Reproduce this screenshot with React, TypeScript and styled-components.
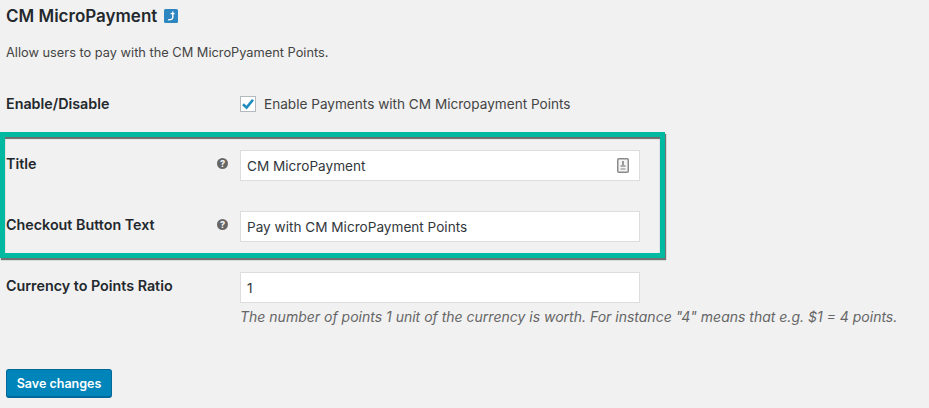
import React from "react";
import styled, { createGlobalStyle } from "styled-components";

const GlobalStyle = createGlobalStyle`
  html, body {
    margin: 0;
    padding: 0;
    background: #f1f1f1;
  }
  body {
    font-family: Inter, "Noto Sans", "Liberation Sans", sans-serif;
    color: #23282d;
  }
`;

const Page = styled.div`
  position: relative;
  width: 929px;
  height: 408px;
  padding: 7px 0 0 6px;
  box-sizing: border-box;
  overflow: hidden;
`;

const Heading = styled.div`
  display: flex;
  align-items: center;
  gap: 7px;
  height: 18px;
`;

const HeadingText = styled.h2`
  margin: 0;
  font-size: 17px;
  line-height: 18px;
  font-weight: 600;
  color: #23282d;
`;

const Intro = styled.p`
  margin: 19px 0 0;
  font-size: 12.8px;
  line-height: 18px;
  color: #444;
`;

const Rows = styled.div`
  display: flex;
  flex-direction: column;
  margin-top: 33px;
`;

const Row = styled.div<{ $gap: number }>`
  display: grid;
  grid-template-columns: 234px 400px;
  margin-bottom: ${(p) => p.$gap}px;
`;

const LabelCell = styled.div`
  display: flex;
  justify-content: space-between;
  padding-right: 12px;
`;

const Label = styled.label<{ $top: number }>`
  margin-top: ${(p) => p.$top}px;
  font-size: 14.3px;
  line-height: 18px;
  font-weight: 600;
  color: #23282d;
`;

const HelpIcon = styled.span`
  display: flex;
  width: 11px;
  height: 11px;
  margin-top: 8px;
  align-items: center;
  justify-content: center;
  border-radius: 50%;
  background: #666;
  color: #f1f1f1;
  font-size: 9px;
  line-height: 11px;
  font-weight: 800;
`;

const CheckRow = styled.div`
  display: flex;
  align-items: center;
  gap: 8px;
  height: 18px;
  white-space: nowrap;
  font-size: 13.6px;
  color: #444;
`;

const CheckBox = styled.span`
  display: flex;
  width: 16px;
  height: 16px;
  box-sizing: border-box;
  align-items: center;
  justify-content: center;
  background: #fff;
  border: 1px solid #b4b9be;
`;

const FieldWrap = styled.div`
  position: relative;
  width: 400px;
`;

const Input = styled.input`
  display: block;
  width: 400px;
  height: 31px;
  box-sizing: border-box;
  margin: 0;
  padding: 0 6px;
  background: #fff;
  border: 1px solid #ddd;
  outline: none;
  font-family: inherit;
  font-size: 13.6px;
  color: #32373c;
`;

const KeyIcon = styled.svg`
  position: absolute;
  top: 8px;
  right: 11px;
`;

const Hint = styled.p`
  margin: 5px 0 0;
  width: 680px;
  white-space: nowrap;
  font-size: 14px;
  line-height: 18px;
  font-style: italic;
  color: #666;
`;

const SaveButton = styled.button`
  display: block;
  width: 106px;
  height: 29px;
  margin-top: 43px;
  padding: 0;
  background: #0085ba;
  border: 1px solid #006799;
  border-bottom-width: 2px;
  border-radius: 3px;
  color: #fff;
  font-family: inherit;
  font-size: 12.5px;
  font-weight: 600;
`;

const Highlight = styled.div`
  position: absolute;
  left: 0;
  top: 132px;
  width: 665px;
  height: 126px;
  box-sizing: border-box;
  border: 5px solid #00b9a0;
  box-shadow:
    1px 2px 1px rgba(60, 60, 60, 0.7),
    inset 0 2px 1px rgba(60, 60, 60, 0.75);
  pointer-events: none;
`;

const BackLink = () => (
  <svg width="14" height="14" viewBox="0 0 14 14">
    <rect width="14" height="14" rx="1.5" fill="#2e86c1" />
    <path d="M8.8 2.6V8.6Q8.8 10.8 4.2 10.8M6.6 4.6H10.6" fill="none" stroke="#fff" strokeWidth="1.4" />
  </svg>
);

const Check = () => (
  <svg width="14" height="14" viewBox="0 0 14 14">
    <path d="M2 7.2 5.6 10.6 12 2.8" fill="none" stroke="#1e8cbe" strokeWidth="2.6" />
  </svg>
);

const App = () => {
  return (
    <Page>
      <GlobalStyle />
      <Heading>
        <HeadingText>CM MicroPayment</HeadingText>
        <BackLink />
      </Heading>
      <Intro>Allow users to pay with the CM MicroPyament Points.</Intro>
      <Rows>
        <Row $gap={37}>
          <LabelCell>
            <Label $top={0}>Enable/Disable</Label>
          </LabelCell>
          <CheckRow>
            <CheckBox>
              <Check />
            </CheckBox>
            Enable Payments with CM Micropayment Points
          </CheckRow>
        </Row>
        <Row $gap={30}>
          <LabelCell>
            <Label $top={5}>Title</Label>
            <HelpIcon>?</HelpIcon>
          </LabelCell>
          <FieldWrap>
            <Input readOnly value="CM MicroPayment" />
            <KeyIcon width="12" height="15" viewBox="0 0 12 15">
              <rect x="0.75" y="0.75" width="10.5" height="13.5" rx="1" fill="#f4f4f4" stroke="#8a8a8a" strokeWidth="1.5" />
              <rect x="5" y="3" width="2" height="4" fill="#999" />
              <rect x="3.5" y="7" width="5" height="2" fill="#aaa" />
              <rect x="3.5" y="10" width="5" height="2" fill="#bbb" />
            </KeyIcon>
          </FieldWrap>
        </Row>
        <Row $gap={30}>
          <LabelCell>
            <Label $top={5}>Checkout Button Text</Label>
            <HelpIcon>?</HelpIcon>
          </LabelCell>
          <FieldWrap>
            <Input readOnly value="Pay with CM MicroPayment Points" />
          </FieldWrap>
        </Row>
        <Row $gap={0}>
          <LabelCell>
            <Label $top={5}>Currency to Points Ratio</Label>
          </LabelCell>
          <FieldWrap>
            <Input readOnly value="1" />
            <Hint>
              The number of points 1 unit of the currency is worth. For instance "4" means that e.g. $1 = 4 points.
            </Hint>
          </FieldWrap>
        </Row>
      </Rows>
      <SaveButton>Save changes</SaveButton>
      <Highlight />
    </Page>
  );
};

export default App;
